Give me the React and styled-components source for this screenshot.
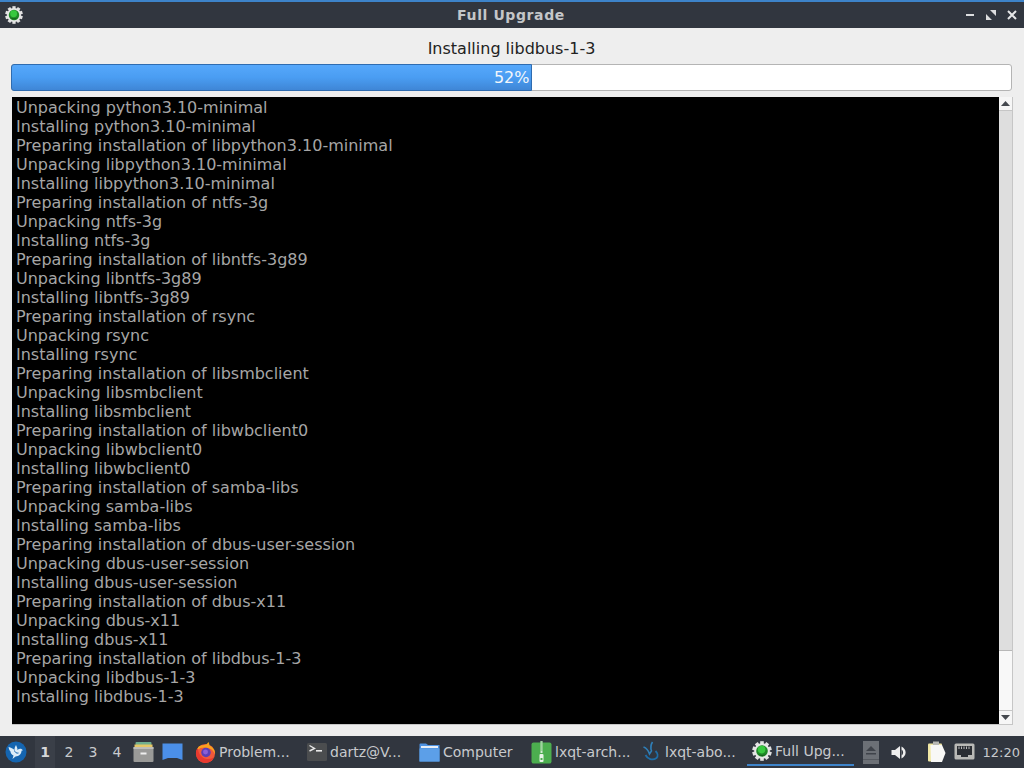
import React from "react";
import styled, { createGlobalStyle } from "styled-components";

const GlobalStyle = createGlobalStyle`
  html, body {
    margin: 0;
    padding: 0;
    height: 100%;
    overflow: hidden;
  }
  body {
    font-family: "DejaVu Sans", "Liberation Sans", sans-serif;
  }
`;

const logLines = [
  "Unpacking python3.10-minimal",
  "Installing python3.10-minimal",
  "Preparing installation of libpython3.10-minimal",
  "Unpacking libpython3.10-minimal",
  "Installing libpython3.10-minimal",
  "Preparing installation of ntfs-3g",
  "Unpacking ntfs-3g",
  "Installing ntfs-3g",
  "Preparing installation of libntfs-3g89",
  "Unpacking libntfs-3g89",
  "Installing libntfs-3g89",
  "Preparing installation of rsync",
  "Unpacking rsync",
  "Installing rsync",
  "Preparing installation of libsmbclient",
  "Unpacking libsmbclient",
  "Installing libsmbclient",
  "Preparing installation of libwbclient0",
  "Unpacking libwbclient0",
  "Installing libwbclient0",
  "Preparing installation of samba-libs",
  "Unpacking samba-libs",
  "Installing samba-libs",
  "Preparing installation of dbus-user-session",
  "Unpacking dbus-user-session",
  "Installing dbus-user-session",
  "Preparing installation of dbus-x11",
  "Unpacking dbus-x11",
  "Installing dbus-x11",
  "Preparing installation of libdbus-1-3",
  "Unpacking libdbus-1-3",
  "Installing libdbus-1-3",
];

const Screen = styled.div`
  width: 1024px;
  height: 768px;
  display: flex;
  flex-direction: column;
  background: #eeeeee;
  overflow: hidden;
`;

const TitleBar = styled.div`
  height: 26px;
  flex: none;
  border-top: 2px solid #3d83c9;
  background: #31363f;
  display: flex;
  align-items: center;
  padding: 0 7px 0 5px;
`;

const TitleIcon = styled.div`
  width: 52px;
  flex: none;
  display: flex;
  align-items: center;
`;

const TitleText = styled.div`
  flex: 1;
  text-align: center;
  color: #c4c6c9;
  font-size: 14px;
  font-weight: bold;
  letter-spacing: 0.6px;
`;

const WindowButtons = styled.div`
  width: 52px;
  flex: none;
  display: flex;
  align-items: center;
  gap: 11px;
`;

const Content = styled.div`
  flex: 1;
  display: flex;
  flex-direction: column;
  min-height: 0;
  padding: 0 12px 11px 11px;
`;

const StatusLabel = styled.div`
  height: 36px;
  flex: none;
  display: flex;
  align-items: center;
  justify-content: center;
  color: #222;
  font-size: 16px;
  padding-top: 4px;
  box-sizing: border-box;
`;

const Progress = styled.div`
  height: 27px;
  flex: none;
  box-sizing: border-box;
  border: 1px solid #b4b4b4;
  border-radius: 3px;
  background: #fff;
  position: relative;
`;

const ProgressFill = styled.div`
  position: absolute;
  left: -1px;
  top: -1px;
  bottom: -1px;
  box-sizing: border-box;
  border: 1px solid #2f6cb0;
  border-radius: 3px 0 0 3px;
  background: linear-gradient(#56a8fb, #4a9df2 50%, #3f86d6);
  color: #f2f6fb;
  font-size: 16px;
  display: flex;
  align-items: center;
  justify-content: flex-end;
  padding-right: 2px;
`;

const LogFrame = styled.div`
  flex: 1;
  min-height: 0;
  margin: 6px -1px 0 1px;
  display: flex;
  border: 1px solid #c6c6c6;
  border-left: none;
  border-top: none;
`;

const LogView = styled.div`
  flex: 1;
  background: #000;
  color: #a6a6a6;
  font-size: 16px;
  line-height: 19px;
  padding: 1px 0 0 4px;
  white-space: pre;
  overflow: hidden;
`;

const Scrollbar = styled.div`
  width: 13px;
  flex: none;
  display: flex;
  flex-direction: column;
  background: #f5f5f5;
`;

const ScrollArrow = styled.div`
  height: 14px;
  flex: none;
  box-sizing: border-box;
  display: flex;
  align-items: center;
  justify-content: center;
  background: #f6f6f6;
  border-${(p) => p.$edge}: 1px solid #c6c6c6;
`;

const ScrollThumb = styled.div`
  height: 539px;
  flex: none;
  background: #dedede;
  border-bottom: 1px solid #b8b8b8;
`;

const ScrollTrack = styled.div`
  flex: 1;
  background: #f8f8f8;
`;

const Panel = styled.div`
  height: 32px;
  flex: none;
  background: #31363f;
  display: flex;
  align-items: stretch;
  color: #c8cacd;
  font-size: 14px;
`;

const MenuButton = styled.div`
  width: 32px;
  margin-right: 1px;
  flex: none;
  display: flex;
  align-items: center;
  justify-content: center;
`;

const Desk = styled.div`
  width: 20px;
  margin: 0 2px;
  flex: none;
  display: flex;
  align-items: center;
  justify-content: center;
  background: ${(p) => (p.$active ? "#3a3f48" : "transparent")};
  color: ${(p) => (p.$active ? "#d6d7d9" : "#c8cacd")};
  font-weight: ${(p) => (p.$active ? "bold" : "normal")};
`;

const QuickIcon = styled.div`
  width: 29px;
  flex: none;
  display: flex;
  align-items: center;
  justify-content: center;
`;

const TaskList = styled.div`
  display: flex;
  margin-left: 3px;
`;

const Task = styled.div`
  width: ${(p) => p.$w}px;
  flex: none;
  box-sizing: border-box;
  display: flex;
  align-items: center;
  gap: 3px;
  padding-left: 5px;
  padding-bottom: ${(p) => (p.$active ? 2 : 0)}px;
  white-space: nowrap;
  position: relative;

  &::after {
    content: "";
    display: ${(p) => (p.$active ? "block" : "none")};
    position: absolute;
    left: 0;
    right: 0;
    bottom: 2px;
    height: 2px;
    background: #3d83c9;
  }
`;

const Tray = styled.div`
  margin-left: auto;
  display: flex;
  align-items: center;
  padding-right: 4px;
`;

const TrayIcon = styled.div`
  margin-left: ${(p) => p.$gap || 0}px;
  display: flex;
  align-items: center;
`;

const Clock = styled.div`
  margin-left: 8px;
  font-size: 13px;
  white-space: nowrap;
`;

const Gear = ({ size = 20 }) => {
  const teeth = Array.from({ length: 10 }, (_, i) => i * 36);
  return (
    <svg width={size} height={size} viewBox="0 0 20 20">
      {teeth.map((a) => (
        <rect key={a} x="8.2" y="0.2" width="3.6" height="4" fill="#e2e2e2" transform={`rotate(${a} 10 10)`} />
      ))}
      <circle cx="10" cy="10" r="7.8" fill="#e6e6e6" />
      <circle cx="10" cy="10" r="5.8" fill="#1f8a27" />
      <circle cx="9.6" cy="8.6" r="3.8" fill="#38c83f" />
      <path d="M5 12.5 Q10 17 15 12.5 Q10 15.5 5 12.5Z" fill="#124f18" />
    </svg>
  );
};

const BirdLogo = () => (
  <svg width="22" height="22" viewBox="0 0 22 22">
    <circle cx="11" cy="11" r="10.5" fill="#1565b0" />
    <path
      d="M3.5 6 C6 6.5 8 7.5 9.5 9 C9.5 7 10 5.5 11 4 C12 6 12.5 7.5 12.5 9 C13.5 8 15 7.5 16.5 8 L18 9.2 L16.5 9.8 C16.5 13 14 15.5 10.5 15.5 L7.5 18 L8.5 14.5 C6.5 13.5 5.5 12 5.5 10.5 C4.5 9.5 4 8 3.5 6Z"
      fill="#dcecf8"
    />
    <path d="M9.5 9.5 C10 11.5 11.5 12.5 13.5 12" stroke="#1565b0" strokeWidth="1" fill="none" />
  </svg>
);

const FileCabinet = () => (
  <svg width="21" height="22" viewBox="0 0 21 22">
    <rect x="2.5" y="1" width="16" height="3" rx="1" fill="#6fae8f" />
    <rect x="1.5" y="3.5" width="18" height="3" fill="#e5c766" />
    <rect x="0.5" y="6" width="20" height="15" rx="1" fill="#9a9a98" />
    <rect x="0.5" y="6" width="20" height="2" fill="#bdbdb9" />
    <rect x="7.5" y="11.5" width="6" height="2" fill="#eeeeee" />
  </svg>
);

const DesktopIcon = () => (
  <svg width="21" height="18" viewBox="0 0 21 18">
    <path d="M0.5 0.5 H20.5 V17 L15 15 H6 L0.5 17Z" fill="#4b8fe8" />
  </svg>
);

const Firefox = () => (
  <svg width="21" height="23" viewBox="0 0 22 23">
    <circle cx="11" cy="12.5" r="10" fill="#f0583a" />
    <path d="M2 9 C3 5 6 4 8 4 C11 4 13 2.5 14 0.5 C15 2 15.2 3.2 15 4.2 C18.5 5.5 21 9 21 12.5 C21 14 20 10 17 8 C13 6 7 5 2 9Z" fill="#f9a21f" />
    <path d="M1 12 C1 9.5 2 8 3 7 C3.5 11 5 16 11 18 C15 19 18 18 20 16 C18.5 20 15 22.5 11 22.5 C5.5 22.5 1 18 1 12Z" fill="#e8392f" />
    <circle cx="11.5" cy="11.5" r="5" fill="#5b3fb5" />
    <circle cx="11" cy="11" r="2.6" fill="#8a5fd6" />
  </svg>
);

const TerminalIcon = () => (
  <svg width="20" height="18" viewBox="0 0 20 18">
    <rect x="0" y="0" width="20" height="18" rx="1.5" fill="#4b4d4f" />
    <path d="M2.5 2.5 L7.5 5.5 L2.5 8" stroke="#e8e8e8" strokeWidth="1.4" fill="none" />
    <rect x="9" y="7" width="6" height="1.6" fill="#e8e8e8" />
  </svg>
);

const FolderIcon = () => (
  <svg width="21" height="19" viewBox="0 0 21 19">
    <path d="M0.5 1.5 Q0.5 0.5 1.5 0.5 H7 L9 2 H20.5 V18.5 H0.5Z" fill="#4e92e2" />
    <rect x="2" y="3" width="17" height="2" fill="#e6eef8" />
    <rect x="0.5" y="5.5" width="20" height="13" fill="#5c9fe8" />
  </svg>
);

const ArchiveIcon = () => (
  <svg width="21" height="23" viewBox="0 0 21 23">
    <rect x="0.5" y="1.5" width="20" height="21" rx="2" fill="#4cae4f" />
    <rect x="9.5" y="0" width="2" height="12" fill="#d6ecd6" />
    <path d="M9.5 1h2M9.5 3h2M9.5 5h2M9.5 7h2M9.5 9h2" stroke="#4cae4f" strokeWidth="0.8" />
    <rect x="8.5" y="13" width="4" height="8" rx="1" fill="#e8f3e8" />
    <rect x="9.5" y="17" width="2" height="2" fill="#4cae4f" />
  </svg>
);

const QtDove = () => (
  <svg width="21" height="22" viewBox="0 0 18 22">
    <path d="M1 6 C4 7 6 10 7 13 L9 10 C8 7 8 4 10 1" stroke="#2f7fb8" strokeWidth="1.6" fill="none" />
    <path d="M3 14 C5 18 10 20 14 17 C16 15 15 12 13 10" stroke="#1f6ea8" strokeWidth="1.8" fill="none" />
  </svg>
);

const Speaker = () => (
  <svg width="16" height="15" viewBox="0 0 15 15">
    <path d="M0 5 H3.5 L8.5 1 V14 L3.5 10 H0Z" fill="#eeeeee" />
    <path d="M10 1.5 C15.5 4.5 15.5 10.5 10 13.5 Z" fill="#eeeeee" />
    <path d="M10 4.5 C12.2 6 12.2 9 10 10.5Z" fill="#31363f" />
  </svg>
);

const Clipboard = () => (
  <svg width="20" height="22" viewBox="0 0 20 22">
    <rect x="1" y="2.5" width="14" height="18" rx="1" fill="#f1e8a5" />
    <path d="M3.5 4 H15 L18.5 12 L15 21 H4 Z" fill="#f8f8f6" />
    <rect x="6" y="0.5" width="6" height="3.5" fill="#b9b9b4" />
  </svg>
);

const NetworkIcon = () => (
  <svg width="21" height="18" viewBox="0 0 21 18">
    <rect x="0.5" y="0.5" width="20" height="16" rx="1.5" fill="#b9b9b6" />
    <path d="M3 3 H18 V12 H14 V14 H7 V12 H3Z" fill="#2b2e33" />
    <path d="M5 3.5 V6 M7.5 3.5 V6 M10 3.5 V6 M12.5 3.5 V6 M15 3.5 V6" stroke="#c8c8c8" strokeWidth="0.9" />
  </svg>
);

const Eject = () => (
  <svg width="16" height="23" viewBox="0 0 16 23">
    <rect width="16" height="23" fill="#6c7076" />
    <path d="M8 5 L13 10 H3Z M3 12 H13 V13.5 H3Z" fill="#3f434a" />
    <rect x="0" y="18" width="16" height="1" fill="#565a60" />
  </svg>
);

const App = () => {
  return (
    <Screen>
      <GlobalStyle />
      <TitleBar>
        <TitleIcon>
          <Gear size={18} />
        </TitleIcon>
        <TitleText>Full Upgrade</TitleText>
        <WindowButtons>
          <svg width="10" height="10" viewBox="0 0 10 10">
            <rect x="1" y="4" width="8" height="2" fill="#dcdddf" />
          </svg>
          <svg width="10" height="10" viewBox="0 0 10 10">
            <path d="M0 10 V4 L6 10Z M10 0 V6 L4 0Z" fill="#dcdddf" />
          </svg>
          <svg width="10" height="10" viewBox="0 0 10 10">
            <path d="M1 1 L9 9 M9 1 L1 9" stroke="#e6e7e8" strokeWidth="2" />
          </svg>
        </WindowButtons>
      </TitleBar>
      <Content>
        <StatusLabel>Installing libdbus-1-3</StatusLabel>
        <Progress>
          <ProgressFill style={{ width: "calc(52% + 2px)" }}>52%</ProgressFill>
        </Progress>
        <LogFrame>
          <LogView>
            {logLines.map((line) => (
              <div key={line}>{line}</div>
            ))}
          </LogView>
          <Scrollbar>
            <ScrollArrow $edge="bottom">
              <svg width="9" height="5" viewBox="0 0 9 5">
                <path d="M4.5 0 L9 5 H0Z" fill="#44484e" />
              </svg>
            </ScrollArrow>
            <ScrollThumb />
            <ScrollTrack />
            <ScrollArrow $edge="top">
              <svg width="9" height="5" viewBox="0 0 9 5">
                <path d="M0 0 H9 L4.5 5Z" fill="#44484e" />
              </svg>
            </ScrollArrow>
          </Scrollbar>
        </LogFrame>
      </Content>
      <Panel>
        <MenuButton>
          <BirdLogo />
        </MenuButton>
        <Desk $active>1</Desk>
        <Desk>2</Desk>
        <Desk>3</Desk>
        <Desk>4</Desk>
        <QuickIcon>
          <FileCabinet />
        </QuickIcon>
        <QuickIcon>
          <DesktopIcon />
        </QuickIcon>
        <TaskList>
          <Task $w="112">
            <Firefox />
            Problem...
          </Task>
          <Task $w="112">
            <TerminalIcon />
            dartz@V...
          </Task>
          <Task $w="112">
            <FolderIcon />
            Computer
          </Task>
          <Task $w="110">
            <ArchiveIcon />
            lxqt-arch...
          </Task>
          <Task $w="111">
            <QtDove />
            lxqt-abo...
          </Task>
          <Task $w="107" $active>
            <Gear size={20} />
            Full Upg...
          </Task>
        </TaskList>
        <Tray>
          <TrayIcon>
            <Eject />
          </TrayIcon>
          <TrayIcon $gap="12">
            <Speaker />
          </TrayIcon>
          <TrayIcon $gap="20">
            <Clipboard />
          </TrayIcon>
          <TrayIcon $gap="7">
            <NetworkIcon />
          </TrayIcon>
          <Clock>12:20</Clock>
        </Tray>
      </Panel>
    </Screen>
  );
};

export default App;
